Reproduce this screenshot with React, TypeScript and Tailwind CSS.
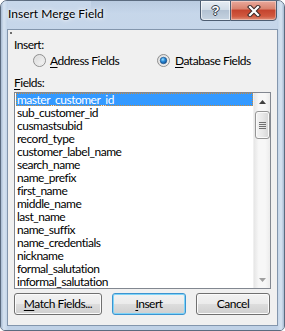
import React from "react";

const fields = [
  "master_customer_id",
  "sub_customer_id",
  "cusmastsubid",
  "record_type",
  "customer_label_name",
  "search_name",
  "name_prefix",
  "first_name",
  "middle_name",
  "last_name",
  "name_suffix",
  "name_credentials",
  "nickname",
  "formal_salutation",
  "informal_salutation",
];

function Radio({ checked }: { checked?: boolean }) {
  return (
    <svg width="13" height="13" viewBox="0 0 13 13" className="shrink-0">
      <defs>
        <linearGradient id={checked ? "rg1" : "rg0"} x1="0" y1="0" x2="1" y2="1">
          <stop offset="0" stopColor="#d5d5d5" />
          <stop offset="1" stopColor="#fbfbfb" />
        </linearGradient>
        <radialGradient id="dot" cx="0.4" cy="0.35" r="0.7">
          <stop offset="0" stopColor="#9ce2ff" />
          <stop offset="0.45" stopColor="#2a8ad8" />
          <stop offset="1" stopColor="#0c4a8c" />
        </radialGradient>
      </defs>
      <circle cx="6.5" cy="6.5" r="6" fill={`url(#${checked ? "rg1" : "rg0"})`} stroke="#8f8f8f" strokeWidth="1" />
      <circle cx="6.5" cy="6.5" r="4.5" fill="none" stroke="#e6e6e6" strokeWidth="1" />
      {checked && <circle cx="6.5" cy="6.5" r="3.3" fill="url(#dot)" stroke="#1a4f86" strokeWidth="0.6" />}
    </svg>
  );
}

function Btn({ children, w, def }: { children: React.ReactNode; w: string; def?: boolean }) {
  return (
    <div
      className={`${w} h-[22px] rounded-[3px] border flex items-center justify-center text-black ${
        def
          ? "border-[#3c94d0] shadow-[inset_0_0_0_1px_#7fd4f8]"
          : "border-[#707070] shadow-[inset_0_0_0_1px_#fbfbfb]"
      } bg-[linear-gradient(to_bottom,#f2f2f2_0%,#ebebeb_50%,#dddddd_51%,#cfcfcf_100%)]`}
    >
      {children}
    </div>
  );
}

export default function App() {
  return (
    <div className="w-[285px] h-[331px] relative overflow-hidden rounded-t-[7px] rounded-b-[5px] border border-[#5b6b7f] bg-[linear-gradient(to_bottom,#c7d7ea_0%,#c2d3e8_30%,#bfd1e6_100%)] font-['Lato','Liberation_Sans',sans-serif] text-[12px] text-black select-none">
      {/* glass streaks */}
      <div className="absolute left-0 top-0 w-[7px] h-full bg-[linear-gradient(to_right,#a9bcd3,#d6e3f1_40%,#c0d2e7)]" />
      <div className="absolute right-0 top-0 w-[7px] h-full bg-[linear-gradient(to_right,#c0d2e7,#d6e3f1_60%,#a9bcd3)]" />
      <div className="absolute left-[90px] top-0 w-[170px] h-[12px] bg-[linear-gradient(to_bottom,#b4c6dc,#c5d6ea)] opacity-70" />

      {/* title bar */}
      <div className="h-[28px] pl-[7px] pt-[5px] relative">
        <div className="leading-[15px] text-[12px] [text-shadow:0_0_6px_#ffffff,0_0_3px_#ffffff]">Insert Merge Field</div>
      </div>

      {/* caption buttons */}
      <div className="absolute top-[-1px] right-[7px] flex h-[21px]">
        <div className="w-[30px] h-full border border-[#4d5d72] border-r-0 rounded-bl-[4px] bg-[linear-gradient(to_bottom,#e6ecf3_0%,#d2dce7_45%,#b3c2d3_50%,#c6d3e1_100%)] flex items-center justify-center shadow-[inset_0_0_0_1px_rgba(255,255,255,0.6)]">
          <span className="text-white font-bold text-[13px] leading-none font-['Liberation_Sans',sans-serif] [text-shadow:0_0_1px_#303a48,1px_0_0_#303a48,-1px_0_0_#303a48,0_1px_0_#303a48,0_-1px_0_#303a48]">?</span>
        </div>
        <div className="w-[47px] h-full border border-[#4d5d72] rounded-br-[4px] bg-[linear-gradient(to_bottom,#e9a99c_0%,#d98470_40%,#c5452f_50%,#d0583f_80%,#e0907a_100%)] flex items-center justify-center shadow-[inset_0_0_0_1px_rgba(255,255,255,0.35)]">
          <svg width="14" height="12" viewBox="0 0 14 12">
            <path d="M3 2 L11 10 M11 2 L3 10" stroke="#3b2a2a" strokeWidth="4.2" strokeLinecap="square" />
            <path d="M3 2 L11 10 M11 2 L3 10" stroke="#ffffff" strokeWidth="2.2" strokeLinecap="square" />
          </svg>
        </div>
      </div>

      {/* client area */}
      <div className="ml-[6px] w-[271px] h-[297px] border border-[#8396ad] bg-[#f0f0f0] pt-[7px] relative tracking-[-0.5px]">
        <div className="absolute left-[2px] top-[2px] w-[2px] h-[2px] bg-[#6d6d6d]" />
        <div className="pl-[6px] h-[15px] leading-[15px]">Insert:</div>
        <div className="mt-[1px] h-[15px] flex items-center pl-[25px]">
          <div className="w-[124px] flex items-center gap-[4px]">
            <Radio />
            <span className="leading-[15px]">
              <u className="underline-offset-[2px]">A</u>ddress Fields
            </span>
          </div>
          <div className="flex items-center gap-[5px]">
            <Radio checked />
            <span className="leading-[15px]">
              <u className="underline-offset-[2px]">D</u>atabase Fields
            </span>
          </div>
        </div>
        <div className="mt-[7px] pl-[6px] h-[15px] leading-[15px]">
          <u className="underline-offset-[2px]">F</u>ields:
        </div>

        {/* listbox */}
        <div className="mt-[2px] ml-[6px] w-[257px] h-[197px] border border-[#828790] bg-white flex">
          <div className="flex-1 pl-[1px] overflow-hidden">
            {fields.map((f, i) => (
              <div
                key={f}
                className={`h-[13px] leading-[13px] pl-[1px] whitespace-nowrap ${
                  i === 0 ? "bg-[#3399ff] text-white outline outline-1 outline-dotted outline-[#c98a3a] -outline-offset-1" : ""
                }`}
              >
                {f}
              </div>
            ))}
          </div>
          {/* scrollbar */}
          <div className="w-[17px] h-full bg-[linear-gradient(to_right,#e6e6e6,#f7f7f7_30%,#f7f7f7_70%,#ececec)] flex flex-col items-center border-l border-[#f0f0f0]">
            <div className="h-[17px] w-full flex items-center justify-center">
              <svg width="7" height="4" viewBox="0 0 7 4">
                <path d="M0 4 L3.5 0 L7 4 Z" fill="#404040" />
              </svg>
            </div>
            <div className="w-[15px] h-[28px] mt-[1px] rounded-[3px] border border-[#959595] bg-[linear-gradient(to_right,#f3f3f3,#e8e8e8_50%,#d6d6d6)] shadow-[inset_0_0_0_1px_#fafafa] flex flex-col items-center justify-center gap-[1px]">
              <div className="w-[7px] h-[1px] bg-[#707070]" />
              <div className="w-[7px] h-[1px] bg-[#707070]" />
              <div className="w-[7px] h-[1px] bg-[#707070]" />
              <div className="w-[7px] h-[1px] bg-[#707070]" />
            </div>
            <div className="flex-1" />
            <div className="h-[17px] w-full flex items-center justify-center">
              <svg width="7" height="4" viewBox="0 0 7 4">
                <path d="M0 0 L7 0 L3.5 4 Z" fill="#a0a0a0" />
              </svg>
            </div>
          </div>
        </div>

        {/* buttons */}
        <div className="mt-[4px] ml-[6px] flex gap-[10px]">
          <Btn w="w-[88px]">
            <span>
              <u className="underline-offset-[2px]">M</u>atch Fields...
            </span>
          </Btn>
          <Btn w="w-[74px]" def>
            <span>
              <u className="underline-offset-[2px]">I</u>nsert
            </span>
          </Btn>
          <Btn w="w-[74px]">Cancel</Btn>
        </div>
      </div>
    </div>
  );
}
